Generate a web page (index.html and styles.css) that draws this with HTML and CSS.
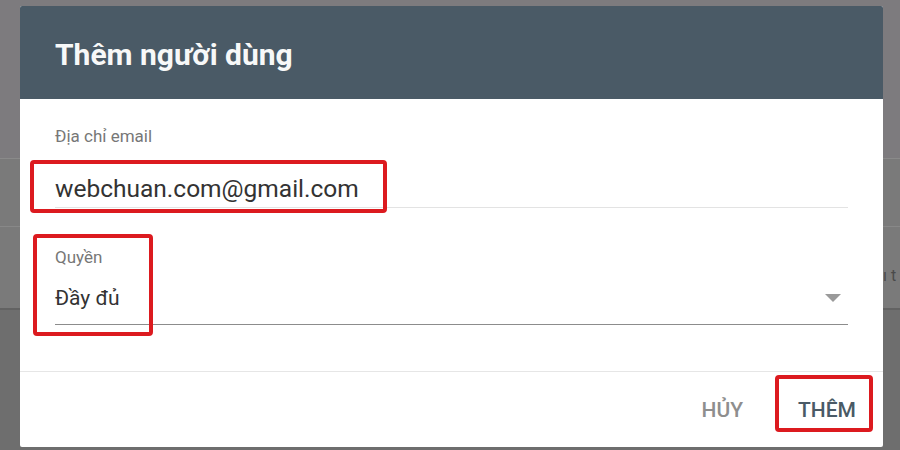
FILE: index.html
```html
<!DOCTYPE html>
<html lang="vi">
<head>
<meta charset="utf-8">
<title>Thêm người dùng</title>
<link rel="stylesheet" href="styles.css">
</head>
<body>
<div class="backdrop">
  <div class="bg-row bg-top"></div>
  <div class="bg-row bg-mid"></div>
  <div class="bg-row bg-text"><span class="bg-word">ı t</span></div>
  <div class="bg-row bg-bottom"></div>
</div>

<div class="dialog">
  <div class="dialog-header">
    <h1 class="dialog-title">Thêm người dùng</h1>
  </div>
  <div class="dialog-body">
    <div class="field field-email">
      <div class="field-label">Địa chỉ email</div>
      <div class="field-value">webchuan.com@gmail.com</div>
    </div>
    <div class="field field-select">
      <div class="field-label">Quyền</div>
      <div class="field-value select-value">
        <span>Đầy đủ</span>
        <span class="caret"></span>
      </div>
    </div>
  </div>
  <div class="dialog-footer">
    <button class="btn btn-cancel">HỦY</button>
    <button class="btn btn-add">THÊM</button>
  </div>

  <div class="mark mark-email"></div>
  <div class="mark mark-role"></div>
  <div class="mark mark-add"></div>
</div>
</body>
</html>
```

FILE: styles.css
```css
* { box-sizing: border-box; }
html, body {
  margin: 0;
  padding: 0;
  width: 900px;
  height: 450px;
  overflow: hidden;
  background: #7b7b7b;
  font-family: Roboto, "Noto Sans", Arial, sans-serif;
}
.backdrop {
  display: flex;
  flex-direction: column;
  height: 450px;
}
.bg-row { width: 100%; }
.bg-top {
  height: 159px;
  background: #7d7b7e;
  border-bottom: 1px solid #8a8a8a;
}
.bg-mid {
  height: 68px;
  background: #7a7a7a;
  border-bottom: 1px solid #888888;
}
.bg-text {
  height: 83px;
  background: #7a7a7a;
  border-bottom: 2px solid #626262;
  padding-left: 883px;
  padding-top: 39px;
  font-size: 16px;
  line-height: 20px;
  color: #4a4a4a;
  white-space: nowrap;
}
.bg-bottom {
  flex: 1;
  background: #6e6e6e;
}

.dialog {
  position: absolute;
  left: 20px;
  top: 6px;
  width: 863px;
  height: 441px;
  background: #ffffff;
  border-radius: 2px;
  display: flex;
  flex-direction: column;
}
.dialog-header {
  height: 93px;
  background: #4a5a66;
  padding: 31px 35px 0;
  border-radius: 2px 2px 0 0;
}
.dialog-title {
  margin: 0;
  font-size: 30px;
  line-height: 36px;
  font-weight: 700;
  color: #f7f8f8;
}
.dialog-body {
  padding: 27px 35px 46px;
  display: flex;
  flex-direction: column;
}
.field-label {
  font-size: 17px;
  line-height: 20px;
  color: #777777;
}
.field-value {
  font-size: 24.5px;
  line-height: 28px;
  color: #333333;
}
.field-email .field-value {
  margin-top: 29px;
  padding-bottom: 4px;
  border-bottom: 1px solid #e3e3e3;
}
.field-select {
  margin-top: 39px;
}
.select-value {
  margin-top: 17px;
  font-size: 21px;
  padding-bottom: 12px;
  border-bottom: 1px solid #8c8c8c;
  display: flex;
  justify-content: space-between;
  align-items: center;
}
.caret {
  width: 0;
  height: 0;
  margin-right: 7px;
  border-left: 8px solid transparent;
  border-right: 8px solid transparent;
  border-top: 8px solid #9a9a9a;
}
.dialog-footer {
  flex: 1;
  border-top: 1px solid #e6e6e6;
  display: flex;
  justify-content: flex-end;
  align-items: flex-start;
  gap: 55px;
  padding: 25px 27px 0 0;
}
.btn {
  background: none;
  border: none;
  padding: 0;
  font-family: Roboto, "Noto Sans", Arial, sans-serif;
  font-size: 21px;
  line-height: 26px;
  font-weight: 500;
  cursor: pointer;
}
.btn-cancel { color: #8e8e8e; }
.btn-add { color: #4a5a66; }

.mark {
  position: absolute;
  border: 4px solid #dc1a1f;
  border-radius: 4px;
}
.mark-email { left: 10px; top: 154px; width: 357px; height: 53px; }
.mark-role { left: 13px; top: 228px; width: 120px; height: 102px; }
.mark-add { left: 755px; top: 369px; width: 98px; height: 57px; }
```
